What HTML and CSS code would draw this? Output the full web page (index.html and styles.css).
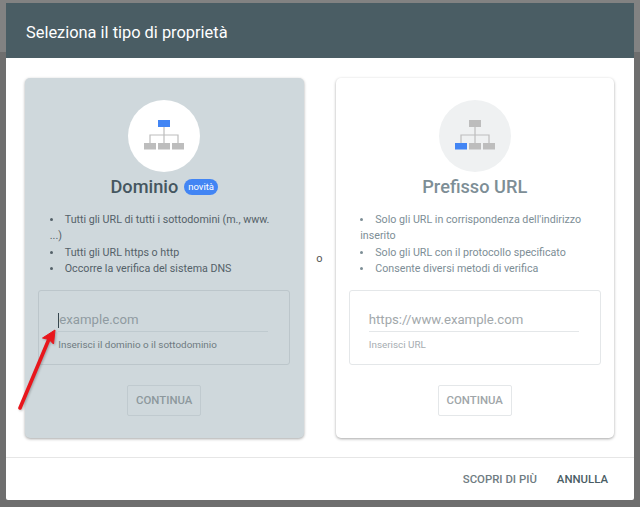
FILE: index.html
```html
<!DOCTYPE html>
<html lang="it">

<head>
    <meta charset="UTF-8">
    <title>Seleziona il tipo di proprietà</title>
    <link rel="stylesheet" href="styles.css">
</head>

<body>
    <div class="dialog">
        <div class="dialog-head">Seleziona il tipo di proprietà</div>

        <div class="dialog-body">
            <div class="card card-on">
                <div class="circle">
                    <svg width="40" height="30" viewBox="0 0 40 30">
                        <path d="M20 7V23M6 23V15H34V23" fill="none" stroke="#bdbdbd" stroke-width="1.2"/>
                        <rect x="14" y="0" width="12" height="7" fill="#4285f4"/>
                        <rect x="0" y="23" width="12" height="6.5" fill="#bdbdbd"/>
                        <rect x="14" y="23" width="12" height="6.5" fill="#bdbdbd"/>
                        <rect x="28" y="23" width="12" height="6.5" fill="#bdbdbd"/>
                    </svg>
                </div>
                <div class="title">Dominio <span class="badge">novità</span></div>
                <ul class="points">
                    <li>Tutti gli URL di tutti i sottodomini (m., www. ...)</li>
                    <li>Tutti gli URL https o http</li>
                    <li>Occorre la verifica del sistema DNS</li>
                </ul>
                <div class="field">
                    <div class="input"><span class="caret"></span>example.com</div>
                    <div class="hint">Inserisci il dominio o il sottodominio</div>
                </div>
                <div class="btn">CONTINUA</div>
            </div>

            <div class="or">o</div>

            <div class="card card-off">
                <div class="circle">
                    <svg width="40" height="30" viewBox="0 0 40 30">
                        <path d="M20 7V23M6 23V15H34V23" fill="none" stroke="#bdbdbd" stroke-width="1.2"/>
                        <rect x="14" y="0" width="12" height="7" fill="#bdbdbd"/>
                        <rect x="0" y="23" width="12" height="6.5" fill="#4285f4"/>
                        <rect x="14" y="23" width="12" height="6.5" fill="#bdbdbd"/>
                        <rect x="28" y="23" width="12" height="6.5" fill="#bdbdbd"/>
                    </svg>
                </div>
                <div class="title">Prefisso URL</div>
                <ul class="points">
                    <li>Solo gli URL in corrispondenza dell'indirizzo inserito</li>
                    <li>Solo gli URL con il protocollo specificato</li>
                    <li>Consente diversi metodi di verifica</li>
                </ul>
                <div class="field">
                    <div class="input">https://www.example.com</div>
                    <div class="hint">Inserisci URL</div>
                </div>
                <div class="btn">CONTINUA</div>
            </div>
        </div>

        <div class="dialog-foot">
            <span class="link">SCOPRI DI PIÙ</span>
            <span class="link link-dark">ANNULLA</span>
        </div>
    </div>

    <!-- freccia rossa sopra lo screenshot -->
    <svg class="arrow" width="48" height="90" viewBox="0 0 48 90">
        <path d="M3 81L32 12" fill="none" stroke="#e8161c" stroke-width="3.6" stroke-linecap="round"/>
        <path d="M38 3L25.5 11L32 12.5L36.5 17Z" fill="#e8161c" stroke="#e8161c" stroke-linejoin="round"/>
    </svg>
</body>

</html>
```

FILE: styles.css
```css
html,
body {
    width: 100%;
    height: 100%;
}

body {
    margin: 0;
    overflow: hidden;
    position: relative;
    background: linear-gradient(#828282 52px, #6e6e6e 52px);
    font-family: Roboto, "Liberation Sans", sans-serif;
}

.dialog {
    width: 628px;
    height: 497px;
    margin: 3px 0 0 6px;
    background: #fff;
    border-radius: 2px;
    box-sizing: border-box;
    display: flex;
    flex-direction: column;
}

.dialog-head {
    height: 55px;
    padding-left: 20px;
    background: #4a5d64;
    color: #fff;
    font-size: 16.4px;
    line-height: 60px;
    flex: none;
}

.dialog-body {
    height: 399px;
    padding: 20px 0 0 19px;
    box-sizing: border-box;
    display: flex;
    flex: none;
}

.card {
    width: 278.5px;
    height: 360px;
    border-radius: 5px;
    box-sizing: border-box;
    padding-top: 22px;
    box-shadow: 0 1px 3px rgba(0, 0, 0, 0.35);
    display: flex;
    flex-direction: column;
    align-items: center;
}

.card-on {
    background: #cfd8dc;
    color: #546169;
}

.card-off {
    background: #fff;
    color: #7d8e96;
}

.or {
    width: 32px;
    padding-top: 172px;
    font-size: 11px;
    line-height: 18px;
    color: #555;
    text-align: center;
}

.circle {
    width: 72px;
    height: 72px;
    border-radius: 50%;
    background: #fff;
    display: flex;
    align-items: center;
    justify-content: center;
}

.circle svg {
    margin-bottom: 2px;
}

.card-off .circle {
    background: #eff1f2;
}

.title {
    height: 28px;
    margin-top: 1px;
    font-size: 18.2px;
    font-weight: 500;
    line-height: 28px;
    display: flex;
    align-items: center;
    gap: 6px;
}

.card-on .title {
    color: #455660;
}

.badge {
    padding: 0 4px;
    height: 16px;
    border-radius: 8px;
    background: #4285f4;
    color: #fff;
    font-size: 9.5px;
    font-weight: 400;
    line-height: 15px;
}

.points {
    width: 253px;
    height: 64px;
    margin: 11px 0 0;
    padding: 0 8px 0 12px;
    box-sizing: border-box;
    list-style: none;
    font-size: 10.7px;
    line-height: 16.3px;
}

.points li::before {
    content: "";
    display: inline-block;
    width: 3px;
    height: 3px;
    margin: 0 12px 2px 0;
    border-radius: 50%;
    background: currentColor;
}

.field {
    width: 252px;
    height: 75px;
    margin-top: 14px;
    padding: 18px 21px 0 19px;
    box-sizing: border-box;
    border: 1px solid #e4e7e9;
    border-radius: 3px;
}

.card-on .field {
    border-color: #bcc6cb;
}

.input {
    height: 22px;
    border-bottom: 1px solid #e4e7e9;
    color: #a2a8ab;
    font-size: 13.2px;
    line-height: 22px;
    display: flex;
}

.card-on .input {
    border-color: #bfcacf;
    color: #8f9ba1;
}

.caret {
    width: 1px;
    height: 15px;
    margin-top: 4px;
    background: #37474f;
}

.hint {
    margin-top: 6px;
    font-size: 9.9px;
    line-height: 13px;
    color: #a6adb1;
}

.card-on .hint {
    color: #6e7a80;
}

.btn {
    width: 74px;
    height: 31px;
    margin-top: 20px;
    box-sizing: border-box;
    border: 1px solid #e4e7e9;
    border-radius: 2px;
    color: #a0a6a9;
    font-size: 11.4px;
    font-weight: 500;
    line-height: 29px;
    text-align: center;
}

.card-on .btn {
    border-color: #c0cacf;
    color: #8d989d;
}

.dialog-foot {
    flex: 1;
    border-top: 1px solid #e6e6e6;
    padding-right: 26px;
    display: flex;
    justify-content: flex-end;
    align-items: center;
    gap: 20px;
    font-size: 11.4px;
    font-weight: 500;
}

.link {
    color: #6f7c82;
}

.link-dark {
    color: #4a5d64;
}

.arrow {
    position: absolute;
    left: 17px;
    top: 327px;
    filter: drop-shadow(1px 1px 1px rgba(0, 0, 0, 0.25));
}
```
